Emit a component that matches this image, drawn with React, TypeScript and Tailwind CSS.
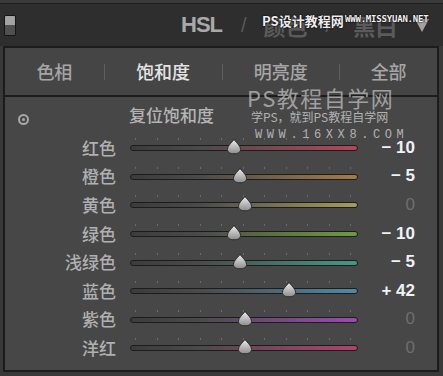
import React from 'react';

interface Row {
  label: string;
  value: string;
  pos: number; // thumb centre, px from track start
  color: string;
}

const rows: Row[] = [
  { label: '红色', value: '− 10', pos: 104, color: '#b4465a' },
  { label: '橙色', value: '− 5', pos: 110, color: '#a57c45' },
  { label: '黄色', value: '0', pos: 115, color: '#a39e58' },
  { label: '绿色', value: '− 10', pos: 104, color: '#6f9c3e' },
  { label: '浅绿色', value: '− 5', pos: 110, color: '#3f9c86' },
  { label: '蓝色', value: '+ 42', pos: 159, color: '#5089a6' },
  { label: '紫色', value: '0', pos: 115, color: '#9a4cb0' },
  { label: '洋红', value: '0', pos: 115, color: '#b3416f' },
];

const cjk = "font-['Noto_Sans_CJK_SC',sans-serif]";

function Thumb() {
  return (
    <svg width="16" height="17" viewBox="0 0 16 17">
      <defs>
        <linearGradient id="tg" x1="0" y1="0" x2="0" y2="1">
          <stop offset="0" stopColor="#f0f0f0" />
          <stop offset="1" stopColor="#8c8c8c" />
        </linearGradient>
      </defs>
      <path
        d="M8 1 C9 4 14.5 7 14.5 11.5 C14.5 14.5 11.5 15.8 8 15.8 C4.5 15.8 1.5 14.5 1.5 11.5 C1.5 7 7 4 8 1 Z"
        fill="url(#tg)"
        stroke="#2a2a2a"
        strokeWidth="1"
      />
    </svg>
  );
}

function Slider({ pos, color }: { pos: number; color: string }) {
  const ticks = [5, 26.5, 48, 69.5, 91, 112.5, 134, 155.5, 177, 198.5, 220];
  return (
    <div className="relative w-[228px] h-[20px]">
      {ticks.map((t) => (
        <div key={t} className="absolute top-[3px] w-px h-[2px] bg-[#6a6a6a]" style={{ left: t }} />
      ))}
      <div
        className="absolute left-0 right-0 top-[10px] h-[6px] rounded-full border border-[#1c1c1c]"
        style={{ background: `linear-gradient(to right, #3c3c3c 0%, #4a4a4a 30%, ${color} 100%)` }}
      />
      <div className="absolute top-[3px]" style={{ left: pos - 8 }}>
        <Thumb />
      </div>
    </div>
  );
}

export default function App() {
  return (
    <div className="relative w-[443px] h-[376px] bg-[#393939] overflow-hidden select-none">
      {/* top strip */}
      <div className="h-[4px] bg-[#3a3a3a] border-b border-[#1d1d1d]" />

      {/* header */}
      <div className="h-[42px] bg-[#2e2e2e] flex items-center relative">
        <div className="ml-[4px] w-[12px] h-[21px] rounded-[2px] border border-[#151515] overflow-hidden flex flex-col">
          <div className="h-1/2 bg-[#a4a4a4]" />
          <div className="h-1/2 bg-[#505050]" />
        </div>
        <div className="ml-[165px] flex items-center h-full">
          <span className="font-['Liberation_Sans',sans-serif] text-[22px] tracking-[-1px] text-[#a9a9a9] font-bold leading-none">
            HSL
          </span>
          <span className="ml-[19px] text-[20px] text-[#5a5a5a] font-['Liberation_Sans',sans-serif]">/</span>
          <span className={`ml-[17px] text-[22px] text-[#5b5b5b] ${cjk} font-bold leading-none`}>颜色</span>
          <span className="ml-[18px] text-[20px] text-[#5a5a5a] font-['Liberation_Sans',sans-serif]">/</span>
          <span className={`ml-[22px] text-[22px] text-[#5b5b5b] ${cjk} font-bold leading-none`}>黑白</span>
          <svg className="ml-[18px]" width="14" height="14" viewBox="0 0 14 14">
            <path d="M0 1 L14 1 L7 14 Z" fill="#a2a2a2" />
          </svg>
        </div>
      </div>

      {/* main box */}
      <div className="ml-[3px] w-[436px] h-[326px] border-2 border-[#1c1c1c] flex flex-col">
        <div className={`h-[47px] bg-[#454545] flex items-center text-[18px] ${cjk} font-medium`}>
          <div className="w-[99px] text-center text-[#a6a6a6]">色相</div>
          <div className="w-px h-[16px] bg-[#5e5e5e]" />
          <div className="w-[117px] text-center text-[#e4e4e4]">饱和度</div>
          <div className="w-px h-[16px] bg-[#5e5e5e]" />
          <div className="w-[117px] text-center text-[#a6a6a6]">明亮度</div>
          <div className="w-px h-[16px] bg-[#5e5e5e]" />
          <div className="w-[97px] text-center text-[#a6a6a6]">全部</div>
        </div>
        <div className="h-[2px] bg-[#1c1c1c]" />
        <div className={`flex-1 bg-[#474747] ${cjk}`}>
          <div className="h-[36px] flex items-center">
            <div className="ml-[13px] mt-[8px] w-[11px] h-[11px] rounded-full border-2 border-[#a8a8a8] flex items-center justify-center">
              <div className="w-[3px] h-[3px] rounded-full bg-[#a8a8a8]" />
            </div>
            <span className="ml-[100px] text-[17px] text-[#b4b4b4] font-medium">复位饱和度</span>
          </div>
          {rows.map((r) => (
            <div key={r.label} className="h-[28.6px] flex items-center">
              <div className="w-[111px] text-right text-[17px] text-[#b0b0b0] font-medium leading-none">{r.label}</div>
              <div className="ml-[14px] mt-[-4px]">
                <Slider pos={r.pos} color={r.color} />
              </div>
              <div
                className={`w-[57px] text-right text-[17px] leading-none font-['Liberation_Sans',sans-serif] ${
                  r.value === '0' ? 'text-[#6e6e6e]' : 'text-[#eef2f6] font-bold'
                }`}
              >
                {r.value}
              </div>
            </div>
          ))}
        </div>
      </div>

      {/* watermarks */}
      <div className={`absolute left-[262px] top-[11px] text-[13px] font-bold text-[#eeeeee] ${cjk} [text-shadow:0_0_2px_#000,0_0_1px_#000]`}>
        PS设计教程网
      </div>
      <div className="absolute left-[345px] top-[13px] text-[9px] font-bold tracking-[-0.2px] text-[#f2f2f2] font-['DejaVu_Sans_Mono',monospace] [text-shadow:0_0_2px_#000,0_0_1px_#000]">
        WWW.MISSYUAN.NET
      </div>
      <div className={`absolute left-[247px] top-[81px] text-[22px] tracking-[1.5px] text-[#c8c8c8]/70 ${cjk}`}>
        PS教程自学网
      </div>
      <div className={`absolute left-[251px] top-[108px] text-[12px] text-[#b2b2b2] ${cjk}`}>
        学PS，就到PS教程自学网
      </div>
      <div className="absolute left-[255px] top-[126px] text-[12px] tracking-[4.6px] text-[#b2b2b2] font-['Liberation_Mono',monospace]">
        WWW.16XX8.COM
      </div>
    </div>
  );
}
